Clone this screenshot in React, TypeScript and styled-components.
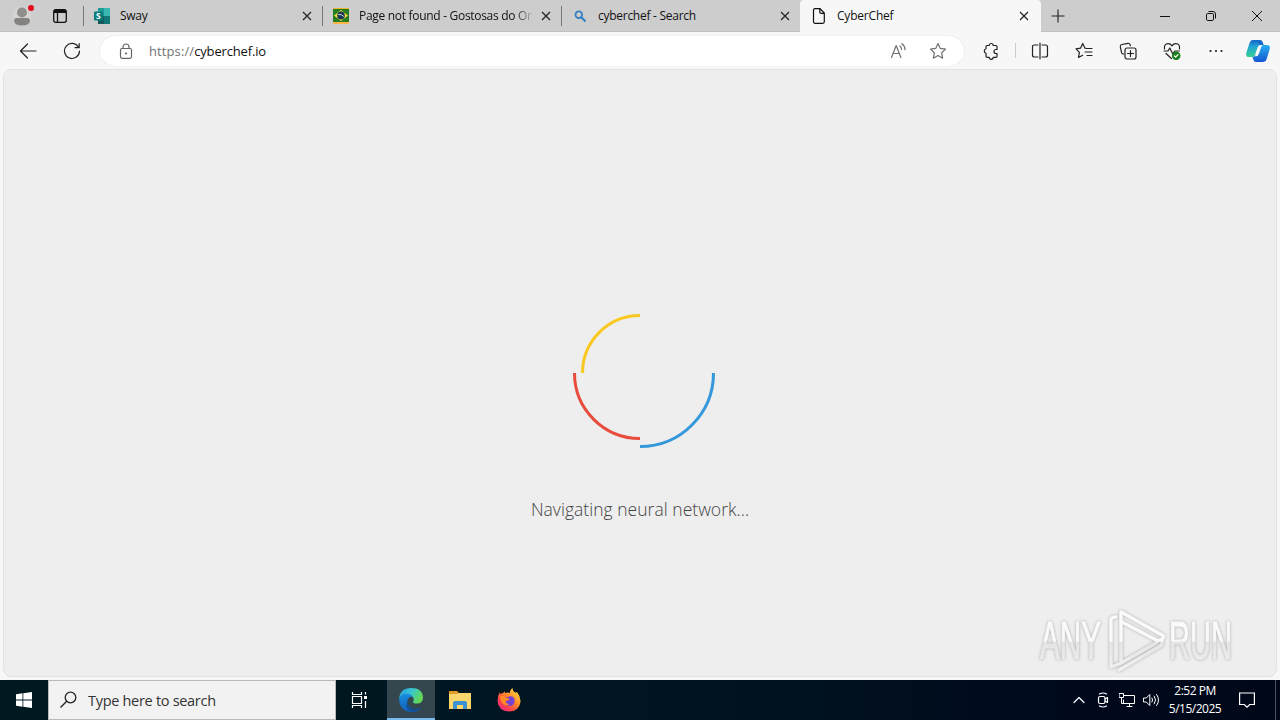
import { ReactNode } from "react";
import styled, { createGlobalStyle } from "styled-components";

const tabs = [
  { title: "Sway", icon: "sway", spacing: -0.3 },
  { title: "Page not found - Gostosas do Or", icon: "brazil", spacing: -0.3 },
  { title: "cyberchef - Search", icon: "search", spacing: -0.27 },
  { title: "CyberChef", icon: "page", spacing: -0.2, active: true },
];

const TabIcon = ({ name }: { name: string }) => {
  if (name === "sway")
    return (
      <svg width="16" height="16" viewBox="0 0 16 16">
        <path d="M4 0h12v16H4z" fill="#38b8b0" />
        <path d="M4 0h6v8H4z" fill="#1e9c98" />
        <path d="M10 8h6v8h-6z" fill="#117a78" />
        <path d="M4 8h6v8H4z" fill="#125a5c" />
        <rect y="3.5" width="9" height="9" rx="1" fill="#087c7b" />
        <text x="2" y="11" fontFamily="Open Sans, sans-serif" fontWeight="700" fontSize="8.5" fill="#fff">
          S
        </text>
      </svg>
    );
  if (name === "brazil")
    return (
      <svg width="16" height="16" viewBox="0 0 17 16" preserveAspectRatio="none">
        <path d="M0 0h17v16H0z" fill="#ebb52f" />
        <path d="M0 1h17v13H0z" fill="#257d20" />
        <path d="M1 7.5 8.5 2l7.500 5.500L8.500 13z" fill="#f0d73b" />
        <circle cx="8.5" cy="7.5" r="4" fill="#183655" />
        <path d="M5.500 6.500q4-.5 6 2" stroke="#d6e3e1" fill="none" />
        <path d="M0 14h17v2H0z" fill="#ffb44a" />
      </svg>
    );
  if (name === "search")
    return (
      <svg width="16" height="16" viewBox="0 0 16 16" fill="none" stroke="#347fc2">
        <circle cx="6.8" cy="6.7" r="3.3" strokeWidth="1.8" />
        <path d="m9.5 9.5 4 4" strokeWidth="2.2" />
      </svg>
    );
  return (
    <svg width="16" height="16" viewBox="0 0 16 16" fill="none" stroke="#111" strokeWidth="1.2">
      <path d="M4 .7h5l4.3 4.4v8.7q0 1.500-1.500 1.500H4q-1.500 0-1.500-1.500V2.200Q2.500.7 4 .7zM8.800 1v3q0 1.400 1.400 1.400h3" />
    </svg>
  );
};

const Icon = ({ size = 18, children }: { size?: number; children: ReactNode }) => (
  <svg
    width={size}
    height={size}
    viewBox={`0 0 ${size} ${size}`}
    fill="none"
    stroke="currentColor"
    strokeWidth="1.2"
    strokeLinecap="round"
    strokeLinejoin="round"
  >
    {children}
  </svg>
);

const Close = () => (
  <svg width="10" height="10" viewBox="0 0 10 10" stroke="#222" strokeWidth="1.2">
    <path d="m1 1 8 8M9 1 1 9" />
  </svg>
);

const TabStrip = () => (
  <Strip>
    <Profile>
      <svg width="18" height="20" viewBox="0 0 18 20">
        <circle cx="9" cy="10" r="9.800" fill="#d6d3d0" />
        <circle cx="9" cy="6.5" r="5" fill="#918e8c" />
        <path d="M1 15q0-3 3-3h10q3 0 3 3-1 4.500-8 4.500T1 15z" fill="#858280" />
      </svg>
      <Dot />
    </Profile>
    <TabMenu>
      <svg width="14" height="14" viewBox="0 0 14 14" fill="none" stroke="#111" strokeWidth="1.3">
        <rect x=".7" y=".7" width="12.600" height="12.600" rx="2" />
        <path d="M1 2.500h12" strokeWidth="3" />
        <path d="M4.500 3v10" />
      </svg>
    </TabMenu>
    {tabs.map((tab) => (
      <Tab key={tab.title} $active={tab.active}>
        <TabIcon name={tab.icon} />
        <TabTitle $spacing={tab.spacing} $fade={tab.icon === "brazil"}>
          {tab.title}
        </TabTitle>
        <Close />
      </Tab>
    ))}
    <NewTab>
      <svg width="14" height="14" viewBox="0 0 14 14" stroke="#222" strokeWidth="1.1">
        <path d="M7 .5v13M.5 7h13" />
      </svg>
    </NewTab>
    <WindowButtons>
      <svg width="10" height="10" viewBox="0 0 10 10" stroke="#111">
        <path d="M0 5.500h10" />
      </svg>
      <svg width="10" height="10" viewBox="0 0 10 10" stroke="#111" fill="none">
        <rect x=".5" y="2.500" width="7" height="7" rx="1.300" />
        <path d="M2.500.500H7Q9.500.500 9.500 3v4.500" />
      </svg>
      <svg width="10" height="10" viewBox="0 0 10 10" stroke="#111">
        <path d="m0 0 10 10M10 0 0 10" />
      </svg>
    </WindowButtons>
  </Strip>
);

const Toolbar = () => (
  <Bar>
    <NavButtons>
      <Icon>
        <path d="M17 9H1.500M8.500 2l-7 7 7 7" />
      </Icon>
      <Icon>
        <path d="M15.500 5.200A7.500 7.500 0 1 0 16.500 9M16.200 1.500v4.200H12" />
      </Icon>
    </NavButtons>
    <AddressBar>
      <Lock>
        <Icon size={16}>
          <rect x="2.500" y="5.500" width="11" height="9.800" rx="1.500" />
          <path d="M5 5.500V4a3 3 0 0 1 6 0v1.500" />
          <circle cx="8" cy="10.500" r=".5" />
        </Icon>
      </Lock>
      <Url>
        <span>https://</span>cyberchef.io
      </Url>
      <AddressActions>
        <Icon>
          <path d="M2.500 15.500 7.200 3.500l4.700 12M4 11.500h6.500M11 4q1.500 1.300 1.500 3.500M13 1.700q3 2.300 3 6" />
        </Icon>
        <Icon>
          <path d="m9 1.500 2.300 4.900 5.200.7-3.800 3.700.9 5.400L9 13.600l-4.600 2.600.9-5.400L1.500 7.100l5.200-.7z" />
        </Icon>
      </AddressActions>
    </AddressBar>
    <Tools>
      <Icon>
        <path d="M5 3.500h2.200a2 2 0 0 1 4 0H14q1 0 1 1v3h-1a2 2 0 0 0 0 4h1v2.800q0 1-1 1h-2.800a2 2 0 0 1-4 0H5q-1 0-1-1v-3a2.400 2.400 0 0 1 0-4.600V4.500q0-1 1-1z" />
      </Icon>
      <Divider />
      <Icon>
        <path d="M7 3H3.500Q1.500 3 1.500 5v8q0 2 2 2H7M11 3h3.500q2 0 2 2v8q0 2-2 2H11M9 1v16" />
      </Icon>
      <Icon>
        <path d="M11.500 6.500 10 6.200 7.700 1.500 5.500 6.200l-4.500.6 3.400 3.500-.9 5.200 4.200-2.300M11 6.500h6M10 10h7M12 13.500h5" />
      </Icon>
      <Icon>
        <path d="M4.500 12.200Q2.800 12 2.500 10.500L1.300 4.700q-.3-1.800 1.500-2.200L9 1.300q1.500-.3 2 1.200l.3 1.200" />
        <rect x="6" y="6" width="11" height="11" rx="2" />
        <path d="M11.500 8.500v6M8.500 11.500h6" />
      </Icon>
      <Icon>
        <path d="M1.500 7Q.8 1.700 5.200 1.700q2.300 0 3.800 2.100 1.500-2.100 3.800-2.100Q17.200 1.700 16.500 7M1 9h4l1.800-3 3 6 2-3h4.500M3 11.500l5.500 5" />
        <circle cx="13.200" cy="13.800" r="3.700" fill="#1d7d20" stroke="#1d7d20" />
        <path d="m11.500 14 1.200 1.200 2.300-2.500" stroke="#fff" />
      </Icon>
      <Icon>
        <g fill="currentColor" stroke="none">
          <circle cx="3.500" cy="9" r="1.100" />
          <circle cx="9" cy="9" r="1.100" />
          <circle cx="14.500" cy="9" r="1.100" />
        </g>
      </Icon>
    </Tools>
    <Copilot width="24" height="24" viewBox="0 0 24 24">
      <defs>
        <linearGradient id="coLeft" x2="0" y2="1">
          <stop stopColor="#1763c6" />
          <stop offset=".4" stopColor="#22a8d5" />
          <stop offset="1" stopColor="#36cf8d" />
        </linearGradient>
        <linearGradient id="coRight" x2="0" y2="1">
          <stop stopColor="#29aef2" />
          <stop offset="1" stopColor="#1457d1" />
        </linearGradient>
      </defs>
      <path d="M7 1h7q2 0 2.700 2.500L17.500 6h-3q-2 0-2.700 2L9 16q-.8 2-2.800 2H3q-3.600 0-2.700-4L3.500 4Q4.500 1 7 1z" fill="url(#coLeft)" />
      <path d="M17 6h4q3.600 0 2.700 4l-3 10q-1 3-3.700 3h-7q-2 0-2.700-2.500L6.500 18q2 0 2.700-2H10q2 0 2.700-2l2-6q.6-2 2.300-2z" fill="url(#coRight)" />
      <path d="M7 1h7q2 0 2.700 2.500L17.500 6h-3q-1.200 0-2-2.500T7 1z" fill="#1668ca" />
      <path d="M14.300 6.500h2.200q-1 .5-1.500 2l-2 6q-.8 2.700-3 2.700H8.500q1-.5 1.400-2l2.300-7q.5-1.700 2.100-1.700z" fill="#f7f7f7" />
    </Copilot>
  </Bar>
);

const Watermark = () => (
  <WatermarkSvg width="206" height="68" viewBox="0 0 206 68">
    <defs>
      <linearGradient id="mark" gradientUnits="userSpaceOnUse" x1="0" x2="0" y1="0" y2="68">
        <stop offset=".5" stopColor="#fafafa" />
        <stop offset=".52" stopColor="#e5e5e5" />
        <stop offset="1" stopColor="#f2f2f2" />
      </linearGradient>
    </defs>
    <g
      fontFamily="Liberation Sans Narrow, Liberation Sans, sans-serif"
      fontSize="54"
      fill="url(#mark)"
      stroke="url(#mark)"
    >
      <text x="5" y="52" textLength="61" lengthAdjust="spacingAndGlyphs">
        ANY
      </text>
      <text x="134" y="52" textLength="63" lengthAdjust="spacingAndGlyphs">
        RUN
      </text>
    </g>
    <g fill="none" stroke="url(#mark)" strokeWidth="3.500" strokeLinejoin="round" strokeLinecap="round">
      <path d="M81 10q-5 0-5 3v47l10-4 35-20M86 54V5l41 23q3 2 0 4l-4 2L87 15M84 63l43-25v-5" />
    </g>
  </WatermarkSvg>
);

const Taskbar = () => (
  <TaskbarWrapper>
    <Start>
      <svg width="16" height="16" viewBox="0 0 16 16" fill="#fff">
        <path d="M0 2.200 6.500 1.300v6.200H0zM7.300 1.200 16 0v7.500H7.300zM0 8.400h6.500v6.300L0 13.800zM7.300 8.400H16V16l-8.700-1.200z" />
      </svg>
    </Start>
    <SearchBox>
      <svg width="18" height="18" viewBox="0 0 18 18" fill="none" stroke="#222" strokeWidth="1.300">
        <circle cx="10.500" cy="6.500" r="5.300" />
        <path d="M6.700 10.300.5 16.500" />
      </svg>
      <SearchText>Type here to search</SearchText>
    </SearchBox>
    <TaskButton>
      <svg width="18" height="16" viewBox="0 0 18 16" fill="none" stroke="#fff" strokeWidth="1.200">
        <path d="M1.500 0v2.500h9V0M1.500 16v-2.500h9V16M1.500 4.500h9v7h-9zM14.500 0v2.500M14.500 9v7" />
        <path d="M14.500 4v3" strokeWidth="3" />
      </svg>
    </TaskButton>
    <PinnedApps>
      <TaskButton $active>
        <svg width="24" height="24" viewBox="0 0 24 24">
          <defs>
            <linearGradient id="edgeTop" x2="1" y2=".4">
              <stop stopColor="#2496d5" />
              <stop offset=".5" stopColor="#36c5d5" />
              <stop offset="1" stopColor="#62d957" />
            </linearGradient>
            <linearGradient id="edgeLow" x2="0" y2="1">
              <stop stopColor="#198ee0" />
              <stop offset="1" stopColor="#1260b8" />
            </linearGradient>
          </defs>
          <path d="M0 11Q1 0 12 0q11.500 0 12 9.500 0 6-6.300 6-4.200 0-3.500-2 1.500-2.500-.7-4.800Q6 2.500 0 11z" fill="url(#edgeTop)" />
          <path d="M0 12Q1 5.500 8 5.500q4 0 6 3.500-3.500-1-5 2-2 4 1 7.500 4.500 4.500 12 1.500Q17.500 25 11 24 1 22.500 0 12z" fill="url(#edgeLow)" />
          <path d="M9 11q-2 4 1 7.500 4.500 4.500 12 .7-3 4.300-8.500 4.800Q4 21 9 11z" fill="#124f93" />
        </svg>
      </TaskButton>
      <TaskButton>
        <svg width="22" height="20" viewBox="0 0 22 20">
          <path d="M0 1h8l2 2h12v5H0z" fill="#df9c29" />
          <path d="M0 4h8l2-1h12v16H0z" fill="#fbd66c" />
          <path d="M4 19v-6q0-2 2-2h10q2 0 2 2v6h-4v-4H8v4z" fill="#3d91d1" />
        </svg>
      </TaskButton>
      <TaskButton>
        <svg width="24" height="24" viewBox="0 0 24 24">
          <defs>
            <linearGradient id="foxFire" x1="1" x2=".1" y2="1">
              <stop stopColor="#fff04a" />
              <stop offset=".45" stopColor="#ff8a28" />
              <stop offset=".75" stopColor="#fc3d50" />
              <stop offset="1" stopColor="#e52791" />
            </linearGradient>
          </defs>
          <path d="M3 4q0 1.500.7 2Q5.500 4.500 7 4.500L8 3v2q3-1 5 0-.5-3 2.500-5 0 3 3 4.800L20 4q4 5 3.500 10Q22 23.500 12 23.500 1 23 .5 12.500.7 7.500 3 4z" fill="url(#foxFire)" />
          <path d="M7 9q3 1 5-.5 5-1 5.700 4-.2 5-5.200 5.500Q7 17.500 7.500 13l4-.5q1.500-2-1-2.200Q8 10.500 7 9z" fill="#7542d4" />
          <path d="M3 9q3-2.500 5 0 1 1.500 4 1.500-1 2.300-3.300 2.300 0 3.500 4 3.200-4 3-7-.5Q3.500 13 3 9z" fill="#ff8c27" />
        </svg>
      </TaskButton>
    </PinnedApps>
    <Tray>
      <Icon size={16}>
        <path d="m3 10.500 5-5 5 5" />
      </Icon>
      <Icon size={16}>
        <rect x="3.500" y="4.500" width="6.500" height="7" rx="1.500" />
        <path d="m10 7 2.500-1.500v5L10 9M4.500 2q3.500-2 7 0M4.500 14q3.500 2 7 0" />
      </Icon>
      <Icon size={16}>
        <path d="M5 3.500h10.500v8H4.500V8M8 14.500h5M10.500 12v2.500M.500 1.500h4v4h-4zM2.500 5.500v6h2" strokeWidth="1" />
      </Icon>
      <Icon size={16}>
        <path d="M.8 6h2.500l3.500-3.500v11L3.300 10H.8zM9 6q1.300 2 0 4M11.300 4.200q2.700 3.800 0 7.600M13.600 2.500q4 5.500 0 11" strokeWidth="1" />
      </Icon>
    </Tray>
    <Clock>
      <span>2:52 PM</span>
      <span>5/15/2025</span>
    </Clock>
    <Notifications>
      <svg width="16" height="16" viewBox="0 0 16 16" fill="none" stroke="#fff" strokeWidth="1.200">
        <path d="M.6 1h14.800v11.500h-4.700L8 15.200l-2.700-2.700H.6z" />
      </svg>
    </Notifications>
    <ShowDesktop />
  </TaskbarWrapper>
);

const App = () => (
  <>
    <GlobalStyle />
    <Screen>
      <TabStrip />
      <Toolbar />
      <Page>
        <svg width="150" height="150" viewBox="-75 -75 150 150" fill="none" strokeWidth="3">
          <path d="M-57.500 0A57.500 57.500 0 0 1 0-57.500" stroke="#f9c922" />
          <path d="M-65.500 0A65.500 65.500 0 0 0 0 65.500" stroke="#e74c3c" />
          <path d="M73.500 0A73.500 73.500 0 0 1 0 73.500" stroke="#3498db" />
        </svg>
        <LoadingText>Navigating neural network...</LoadingText>
        <Watermark />
      </Page>
      <Taskbar />
    </Screen>
  </>
);

export default App;

const GlobalStyle = createGlobalStyle`
  * {
    box-sizing: border-box;
  }

  body {
    margin: 0;
    overflow: hidden;
    font-family: "Open Sans", "Noto Sans", sans-serif;
  }

  svg {
    display: block;
    flex-shrink: 0;
  }
`;

const Screen = styled.div`
  width: 1280px;
  height: 720px;
  display: flex;
  flex-direction: column;
  background: #f7f7f7;
`;

const Strip = styled.div`
  display: flex;
  height: 32px;
  background: #cdcdcd;
  border-bottom: 1px solid #c0c0c0;
`;

const Profile = styled.div`
  position: relative;
  width: 44px;
  padding: 6px 0 0 13px;
`;

const Dot = styled.div`
  position: absolute;
  left: 28px;
  top: 5px;
  width: 6px;
  height: 6px;
  border-radius: 50%;
  background: #e00b1c;
`;

const TabMenu = styled.div`
  width: 39px;
  padding: 9px 0 0 9px;
`;

const Tab = styled.div<{ $active?: boolean }>`
  display: flex;
  align-items: center;
  width: ${({ $active }) => ($active ? 241 : 239)}px;
  height: 32px;
  padding: 0 ${({ $active }) => ($active ? 12 : 10)}px 0 11px;
  border-radius: ${({ $active }) => ($active ? "4px 4px 0 0" : "0")};
  background: ${({ $active }) =>
    $active
      ? "#f7f7f7"
      : "linear-gradient(#777, #777) left 6px / 1px 20px no-repeat"};
`;

const TabTitle = styled.div<{ $spacing: number; $fade: boolean }>`
  flex: 1;
  margin: 0 8px 0 10px;
  white-space: nowrap;
  font-size: 12px;
  line-height: 16px;
  letter-spacing: ${({ $spacing }) => $spacing}px;
  color: #111;
  mask-image: ${({ $fade }) =>
    $fade ? "linear-gradient(90deg, #000 155px, transparent 176px)" : "none"};
`;

const NewTab = styled.div`
  padding: 9px 0 0 10px;
`;

const WindowButtons = styled.div`
  display: flex;
  align-items: center;
  gap: 36px;
  margin-left: auto;
  padding-right: 18px;
`;

const Bar = styled.div`
  display: flex;
  align-items: center;
  height: 37px;
  color: #222;
`;

const NavButtons = styled.div`
  display: flex;
  gap: 26px;
  width: 100px;
  padding-left: 19px;
`;

const AddressBar = styled.div`
  display: flex;
  align-items: center;
  width: 864px;
  height: 30px;
  padding: 0 17px 0 18px;
  border-radius: 15px;
  background: #fff;
  box-shadow: 0 0 1px #ccc;
`;

const Lock = styled.div`
  color: #666;
`;

const Url = styled.div`
  margin-left: 15px;
  font-size: 13px;
  line-height: 18px;
  letter-spacing: -0.15px;
  color: #111;

  span {
    color: #737373;
    letter-spacing: 0.1px;
  }
`;

const AddressActions = styled.div`
  display: flex;
  gap: 22px;
  margin-left: auto;
  color: #707070;
`;

const Tools = styled.div`
  display: flex;
  align-items: center;
  gap: 26px;
  padding-left: 18px;
`;

const Divider = styled.div`
  width: 1px;
  height: 15px;
  margin: 0 -11px;
  background: #ccc;
`;

const Copilot = styled.svg`
  margin-left: auto;
  margin-right: 10px;
`;

const Page = styled.div`
  position: relative;
  display: flex;
  flex-direction: column;
  align-items: center;
  height: 608px;
  margin: 0 3px 3px;
  padding-top: 228px;
  border: 1px solid #e2e2e2;
  border-radius: 8px;
  background: #eee;
`;

const LoadingText = styled.div`
  margin-top: 49px;
  font-size: 17.5px;
  line-height: 24px;
  font-weight: 300;
  letter-spacing: 0.03px;
  color: #444;
`;

const WatermarkSvg = styled.svg`
  position: absolute;
  right: 35px;
  bottom: 1px;
  filter: drop-shadow(0 0 1.5px #aaa);
`;

const TaskbarWrapper = styled.div`
  display: flex;
  height: 40px;
  color: #fff;
  background: linear-gradient(90deg, #001820, #001520 50%, #00091c 85%, #000818);
`;

const Start = styled.div`
  display: flex;
  align-items: center;
  justify-content: center;
  width: 48px;
`;

const SearchBox = styled.div`
  display: flex;
  align-items: center;
  width: 288px;
  padding-left: 11px;
  border: 1px solid #b9b9b9;
  background: #f2f2f2;
`;

const SearchText = styled.div`
  margin-left: 10px;
  font-size: 14.5px;
  letter-spacing: -0.3px;
  color: #333;
`;

const PinnedApps = styled.div`
  display: flex;
  gap: 1px;
  margin-left: 3px;
`;

const TaskButton = styled.div<{ $active?: boolean }>`
  display: flex;
  align-items: center;
  justify-content: center;
  width: 48px;
  background: ${({ $active }) => ($active ? "#34474f" : "none")};
  box-shadow: ${({ $active }) => ($active ? "inset 0 -2px #76b9ed" : "none")};
`;

const Tray = styled.div`
  display: flex;
  align-items: center;
  gap: 8px;
  margin-left: auto;
`;

const Clock = styled.div`
  display: flex;
  flex-direction: column;
  align-items: center;
  width: 72px;
  padding-top: 2px;
  font-size: 12px;
  line-height: 18px;
  letter-spacing: -0.5px;
`;

const Notifications = styled.div`
  display: flex;
  align-items: center;
  justify-content: center;
  width: 32px;
`;

const ShowDesktop = styled.div`
  width: 5px;
  margin-left: 12px;
  border-left: 1px solid #4b5360;
`;
